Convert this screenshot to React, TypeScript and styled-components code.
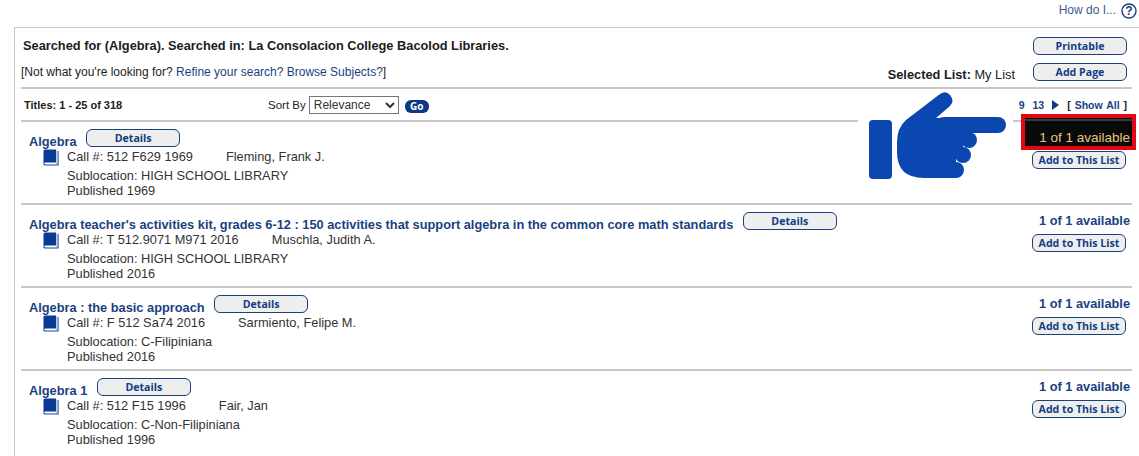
import React from 'react';
import styled, { createGlobalStyle } from 'styled-components';

const GlobalStyle = createGlobalStyle`
  html, body {
    margin: 0;
    padding: 0;
    background: #fff;
    overflow: hidden;
  }
  body {
    font-family: "Liberation Sans", Arial, sans-serif;
    color: #222;
  }
`;

const navy = '#1b3f7f';
const rule = '#c8c8c8';

const Page = styled.div`
  width: 1139px;
  height: 456px;
  position: relative;
  overflow: hidden;
`;

const HelpBar = styled.div`
  height: 27px;
  display: flex;
  justify-content: flex-end;
  align-items: flex-start;
  gap: 5px;
  padding: 3px 2px 0 0;
  box-sizing: border-box;
  font-size: 12px;
  color: #3d5a8c;
`;

const HelpLabel = styled.span`
  line-height: 15px;
`;

const Panel = styled.div`
  min-height: 430px;
  margin-left: 14px;
  border-top: 1px solid ${rule};
  border-left: 1px solid ${rule};
  padding: 0 7px 0 6px;
  position: relative;
`;

const Header = styled.div`
  height: 59px;
  display: flex;
  justify-content: space-between;
  border-bottom: 2px solid ${rule};
`;

const Summary = styled.div`
  display: flex;
  flex-direction: column;
`;

const SearchedFor = styled.div`
  font-size: 12.8px;
  font-weight: bold;
  line-height: 14px;
  padding: 11px 0 0 2px;
  color: #1c1c1c;
`;

const Hint = styled.div`
  font-size: 12px;
  line-height: 14px;
  padding-top: 12px;
`;

const Link = styled.span`
  color: ${navy};
`;

const HeaderActions = styled.div`
  display: flex;
  flex-direction: column;
  align-items: flex-end;
  gap: 8px;
  padding: 9px 5px 0 0;
`;

const ListRow = styled.div`
  display: flex;
  align-items: flex-end;
  gap: 18px;
`;

const SelectedList = styled.div`
  font-size: 12.8px;
  line-height: 14px;
  margin-bottom: -1px;
  b {
    color: #1c1c1c;
  }
`;

const PillButton = styled.button`
  width: 94px;
  height: 18px;
  flex: none;
  padding: 0;
  border: 1px solid ${navy};
  border-radius: 6px;
  background: #eeeeec;
  color: #123d86;
  font-family: "Open Sans", sans-serif;
  font-size: 10.6px;
  font-weight: 700;
  line-height: 15px;
`;

const Toolbar = styled.div`
  height: 31px;
  display: flex;
  align-items: center;
  border-bottom: 2px solid ${rule};
  position: relative;
`;

const Titles = styled.div`
  width: 244px;
  padding-left: 3px;
  font-size: 11px;
  font-weight: bold;
`;

const SortBy = styled.label`
  display: flex;
  align-items: center;
  gap: 3px;
  font-size: 11.5px;
`;

const SortSelect = styled.select`
  width: 90px;
  height: 18px;
  padding: 0;
  border: 1px solid #767676;
  border-radius: 0;
  background: #fff;
  font-family: "Liberation Sans", Arial, sans-serif;
  font-size: 12px;
  color: #333;
`;

const GoButton = styled.button`
  width: 24px;
  height: 13px;
  margin: 3px 0 0 6px;
  padding: 0;
  border: 0;
  border-radius: 6px;
  background: #0b3a84;
  color: #fff;
  font-family: "Open Sans", sans-serif;
  font-size: 10px;
  font-weight: 700;
  line-height: 13px;
`;

const Pager = styled.div`
  margin-left: auto;
  display: flex;
  align-items: center;
  padding-right: 5px;
  font-size: 10.5px;
  font-weight: bold;
  color: ${navy};
`;

const PageNumber = styled.span`
  margin-right: 8px;
`;

const NextArrow = styled.span`
  width: 0;
  height: 0;
  margin-right: 8px;
  border-left: 7px solid #123d86;
  border-top: 5.5px solid transparent;
  border-bottom: 5.5px solid transparent;
`;

const ShowAll = styled.span`
  word-spacing: 1px;
  b {
    color: #222;
  }
`;

const Record = styled.div`
  height: 81px;
  display: flex;
  justify-content: space-between;
  border-bottom: 2px solid ${rule};
  &:last-child {
    border-bottom: 0;
  }
`;

const RecordMain = styled.div`
  padding: 7px 0 0 8px;
`;

const TitleLine = styled.div`
  height: 18px;
  display: flex;
  gap: 9.5px;
  align-items: flex-start;
`;

const Title = styled.span`
  font-size: 12.8px;
  font-weight: bold;
  line-height: 18px;
  padding-top: 4px;
  color: ${navy};
  white-space: nowrap;
`;

const Body = styled.div`
  display: grid;
  grid-template-columns: 24px auto;
  padding: 1px 0 0 14px;
`;

const BookIcon = styled.svg`
  width: 16px;
  height: 17px;
  display: block;
  margin-top: 1px;
`;

const Lines = styled.div`
  font-size: 12.8px;
  color: #333;
  line-height: 15px;
`;

const CallLine = styled.div`
  display: flex;
  gap: 33px;
  margin-bottom: 4px;
  padding-top: 1px;
`;

const RecordSide = styled.div`
  width: 110px;
  display: flex;
  flex-direction: column;
  align-items: flex-end;
  padding-top: 8px;
  gap: 6px;
  box-sizing: border-box;
`;

const Availability = styled.div<{ $highlight?: boolean }>`
  position: relative;
  font-size: ${(p) => (p.$highlight ? '13.5px' : '12.8px')};
  line-height: 15px;
  font-weight: ${(p) => (p.$highlight ? 'normal' : 'bold')};
  color: ${(p) => (p.$highlight ? '#e8c57e' : navy)};
  margin-right: 2px;
  white-space: nowrap;
  z-index: 0;
  ${(p) =>
    p.$highlight &&
    `
    &::before {
      content: '';
      position: absolute;
      z-index: -1;
      right: -6px;
      top: -16px;
      width: 107px;
      height: 28px;
      background: linear-gradient(#0a0a0a 1px, #3a3a3a 1px, #3a3a3a 3px, #0a0a0a 3px);
      border: 4px solid #e30613;
    }
  `}
`;

const SidePill = styled(PillButton)`
  margin-right: 6px;
`;

const PointingHand = styled.div`
  position: absolute;
  left: 843px;
  top: 62px;
  width: 155px;
  height: 92px;
  background: #fff;
`;

const HandSvg = styled.svg`
  display: block;
  width: 155px;
  height: 92px;
`;

const HelpIcon = () => (
  <svg width="16" height="16" viewBox="0 0 16 16">
    <circle cx="8" cy="8" r="7" fill="none" stroke="#1b3f7f" strokeWidth="1.4" />
    <text x="8" y="12" textAnchor="middle" fontSize="12" fontWeight="bold" fontFamily="Liberation Sans" fill="#1b3f7f">
      ?
    </text>
  </svg>
);

const Book = () => (
  <BookIcon viewBox="0 0 16 17">
    <path d="M0.5 2 Q0.5 0.5 2 0.5 H13 V13.5 H2.5 Q0.5 13.5 0.5 15 Z" fill="#0a3a94" />
    <path d="M0.6 14.5 Q1 16 2.5 16 H15 V2" fill="none" stroke="#1b4a96" strokeWidth="1.2" />
    <path d="M14 1.5 V15" stroke="#9fb2d4" strokeWidth="1.4" />
  </BookIcon>
);

const Hand = () => (
  <HandSvg viewBox="0 0 155 92">
    <g fill="#0a47b0">
      <rect x="11" y="30" width="23" height="59" rx="4" />
      <path d="M39 52 Q39 38 48 30 L82 4 Q88 0 92 5 Q97 11 92 16 L78 28 H111 V50 H105 V65 H98 V88 H66 Q39 88 39 62 Z" />
      <rect x="78" y="27" width="70" height="16" rx="8" />
      <circle cx="111" cy="50" r="8" />
      <circle cx="105" cy="65" r="8" />
      <circle cx="98" cy="80" r="8" />
    </g>
  </HandSvg>
);

type Item = {
  title: string;
  call: string;
  author: string;
  sublocation: string;
  year: string;
  highlight?: boolean;
};

const items: Item[] = [
  {
    title: 'Algebra',
    call: '512 F629 1969',
    author: 'Fleming, Frank J.',
    sublocation: 'HIGH SCHOOL LIBRARY',
    year: '1969',
    highlight: true,
  },
  {
    title: "Algebra teacher's activities kit, grades 6-12 : 150 activities that support algebra in the common core math standards",
    call: 'T 512.9071 M971 2016',
    author: 'Muschla, Judith A.',
    sublocation: 'HIGH SCHOOL LIBRARY',
    year: '2016',
  },
  {
    title: 'Algebra : the basic approach',
    call: 'F 512 Sa74 2016',
    author: 'Sarmiento, Felipe M.',
    sublocation: 'C-Filipiniana',
    year: '2016',
  },
  {
    title: 'Algebra 1',
    call: '512 F15 1996',
    author: 'Fair, Jan',
    sublocation: 'C-Non-Filipiniana',
    year: '1996',
  },
];

export default function App() {
  return (
    <Page>
      <GlobalStyle />
      <HelpBar>
        <HelpLabel>How do I...</HelpLabel>
        <HelpIcon />
      </HelpBar>
      <Panel>
        <Header>
          <Summary>
            <SearchedFor>Searched for (Algebra). Searched in: La Consolacion College Bacolod Libraries.</SearchedFor>
            <Hint>
              [Not what you're looking for? <Link>Refine your search? Browse Subjects?</Link>]
            </Hint>
          </Summary>
          <HeaderActions>
            <PillButton>Printable</PillButton>
            <ListRow>
              <SelectedList>
                <b>Selected List:</b> My List
              </SelectedList>
              <PillButton>Add Page</PillButton>
            </ListRow>
          </HeaderActions>
        </Header>
        <Toolbar>
          <Titles>Titles: 1 - 25 of 318</Titles>
          <SortBy>
            Sort By
            <SortSelect defaultValue="Relevance">
              <option>Relevance</option>
            </SortSelect>
          </SortBy>
          <GoButton>Go</GoButton>
          <Pager>
            <PageNumber>9</PageNumber>
            <PageNumber>13</PageNumber>
            <NextArrow />
            <ShowAll>
              <b>[</b> Show All <b>]</b>
            </ShowAll>
          </Pager>
        </Toolbar>
        <div>
          {items.map((item) => (
            <Record key={item.title}>
              <RecordMain>
                <TitleLine>
                  <Title>{item.title}</Title>
                  <PillButton>Details</PillButton>
                </TitleLine>
                <Body>
                  <Book />
                  <Lines>
                    <CallLine>
                      <span>Call #: {item.call}</span>
                      <span>{item.author}</span>
                    </CallLine>
                    <div>Sublocation: {item.sublocation}</div>
                    <div>Published {item.year}</div>
                  </Lines>
                </Body>
              </RecordMain>
              <RecordSide>
                <Availability $highlight={item.highlight}>1 of 1 available</Availability>
                <SidePill>Add to This List</SidePill>
              </RecordSide>
            </Record>
          ))}
        </div>
        <PointingHand>
          <Hand />
        </PointingHand>
      </Panel>
    </Page>
  );
}
